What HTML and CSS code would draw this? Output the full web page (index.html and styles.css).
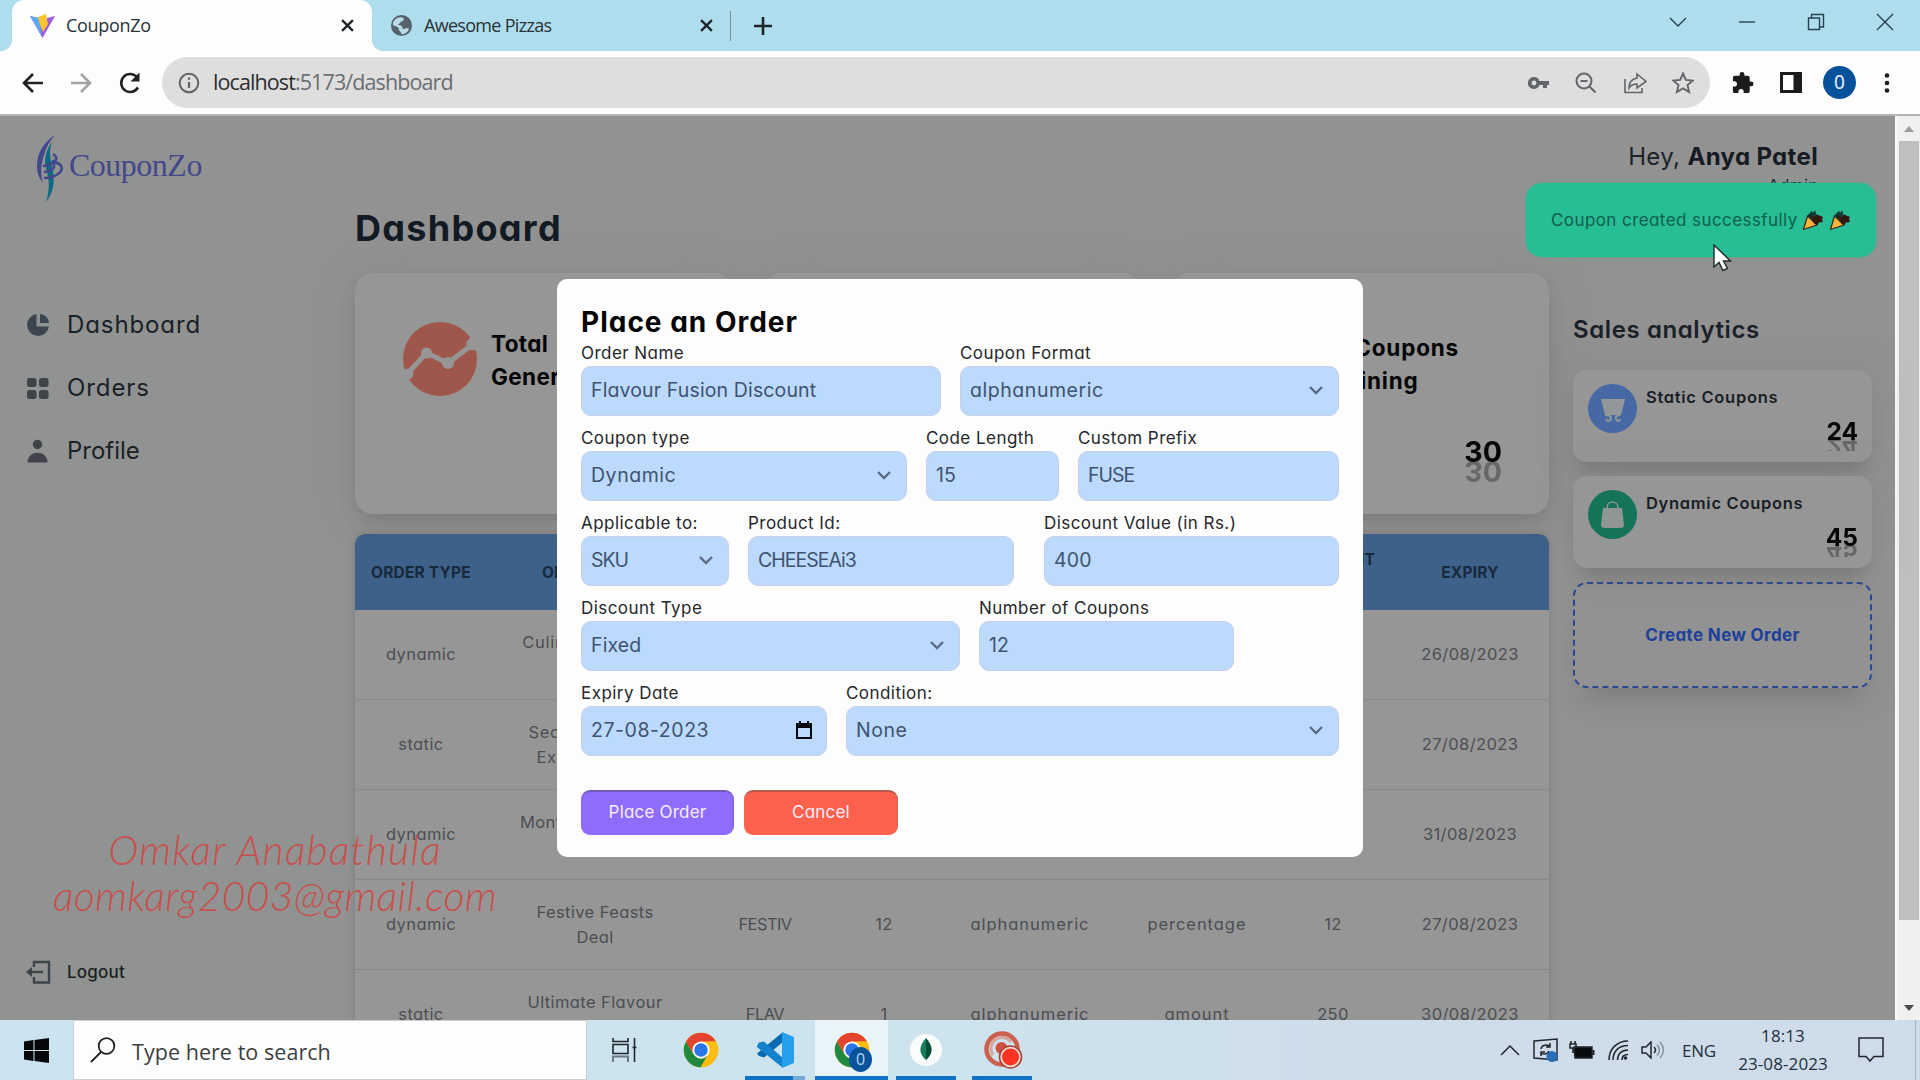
FILE: index.html
```html
<!DOCTYPE html>
<html lang="en">
<head>
<meta charset="utf-8">
<title>CouponZo</title>
<link rel="stylesheet" href="styles.css">
</head>
<body>
<svg width="0" height="0" class="defs">
  <defs>
    <symbol id="chev" viewBox="0 0 16 10"><path d="M2 2l6 6 6-6" fill="none" stroke="#5a6b85" stroke-width="2.4"/></symbol>
    <symbol id="x" viewBox="0 0 12 12"><path d="M1 1l10 10M11 1L1 11" fill="none" stroke="currentColor" stroke-width="2.1"/></symbol>
    <symbol id="chrome" viewBox="0 0 48 48">
      <circle cx="24" cy="24" r="23" fill="#fbbd12"/>
      <path d="M4.1 12.5A23 23 0 0 0 24 47l9.5-17.5L24 24 14 29.5z" fill="#20893d"/>
      <path d="M4.1 12.5A23 23 0 0 1 43.9 12.5H24L14 29.5z" fill="#e4432f"/>
      <path d="M43.9 12.5A23 23 0 0 1 23.5 47L34 29 30 13z" fill="#fbbd12"/>
      <circle cx="24" cy="24" r="11.5" fill="#fff"/><circle cx="24" cy="24" r="9" fill="#2a75e8"/>
    </symbol>
    <symbol id="party" viewBox="0 0 22 22">
      <path d="M1.500 20.500L5.500 7l9.500 9z" fill="#f6b53a" stroke="#3b2412" stroke-width="1.200" stroke-linejoin="round"/>
      <path d="M5 7l4.500-5 2 1.500L13 1l1.500 5L9 9.500z" fill="#123d3a"/>
      <path d="M10 9l5-3.500 6 2.500-1 2 1 3-4 .5-2 3-3-2.500z" fill="#35160f"/>
      <path d="M8 6l6 7" stroke="#2a1a10" stroke-width="2"/>
    </symbol>
  </defs>
</svg>
<div class="screen">
  <header class="tabs">
    <div class="tab active">
      <svg class="fav" width="25" height="26" viewBox="0 0 25 26"><path d="M0 3l12.500 22L25 3l-12 3z" fill="#9b5de0"/><path d="M0 3l6 10 6 11L9 5z" fill="#5aa9f5"/><path d="M8 4l8-3 2 10-5 8-3-7z" fill="#fcc42c"/></svg>
      <span class="tab-name t1">CouponZo</span>
      <svg class="tab-x" width="13" height="13"><use href="#x"/></svg>
    </div>
    <div class="tab idle">
      <svg class="fav" width="23" height="23" viewBox="0 0 24 24"><circle cx="12" cy="12" r="11" fill="#56636b"/><path d="M5 6c4-3 6-3 9-2 1 3-1 4-3 4 0 2-2 2-3 3 2 1 5 1 5 3s2 2 3 1c2-1 3 1 4 0-1 4-5 6-8 6 0-3-3-3-3-6 0-2-5-2-6-4 0-2 1-4 2-5z" fill="#b9dbe8"/></svg>
      <span class="tab-name t2">Awesome Pizzas</span>
      <svg class="tab-x" width="13" height="13"><use href="#x"/></svg>
    </div>
    <i class="tab-sep"></i>
    <svg class="plus" width="18" height="18" viewBox="0 0 18 18"><path d="M9 0v18M0 9h18" stroke="#1c2429" stroke-width="2.600"/></svg>
    <div class="win">
      <svg width="18" height="18" viewBox="0 0 18 18"><path d="M1 5l8 8 8-8" /></svg>
      <svg width="18" height="18" viewBox="0 0 18 18"><path d="M1 9h16"/></svg>
      <svg width="18" height="18" viewBox="0 0 18 18"><path d="M1.500 5h11v11.500h-11zM4.500 5V1.500h12V14h-4"/></svg>
      <svg width="18" height="18" viewBox="0 0 18 18"><path d="M1 1l16 16M17 1L1 17"/></svg>
    </div>
  </header>
  <nav class="toolbar">
    <div class="navs">
      <svg width="22" height="22" viewBox="0 0 22 22" class="dark"><path d="M21 11H3M11 2l-9 9 9 9"/></svg>
      <svg width="22" height="22" viewBox="0 0 22 22" class="pale"><path d="M1 11h18M11 2l9 9-9 9"/></svg>
      <svg width="24" height="24" viewBox="0 0 24 24" class="dark"><path d="M20 16.500A9 9 0 1 1 19 6"/><path d="M21.500 1.500v9h-9z" fill="#222" stroke="none"/></svg>
    </div>
    <div class="omni">
      <svg width="22" height="22" viewBox="0 0 22 22"><circle cx="11" cy="11" r="9.300" fill="none" stroke="#5f6368" stroke-width="2"/><path d="M11 10v6M11 5.500v2.200" stroke="#5f6368" stroke-width="2.200"/></svg>
      <span class="url">localhost<em>:5173/dashboard</em></span>
      <div class="omni-icons">
        <svg width="22" height="16" viewBox="0 0 22 16"><path d="M6 2a6 6 0 1 0 5.500 8H15v3h4v-3h2V6H11.500A6 6 0 0 0 6 2z" fill="#62666a"/><circle cx="6" cy="8" r="2.400" fill="#dedede"/></svg>
        <svg width="22" height="22" viewBox="0 0 22 22"><circle cx="9" cy="9" r="7.500"/><path d="M14.500 14.500l6 6M5.500 9h7"/></svg>
        <svg width="24" height="22" viewBox="0 0 24 22"><path d="M2 7v13.500h17V16M14 2l9 7.500-9 6.500v-4c-4 0-6 1-8 4 0-6 3-9 8-10z" stroke-width="1.600"/></svg>
        <svg width="22" height="22" viewBox="0 0 22 22"><path d="M11 1.500l2.800 6.400 7 .6-5.300 4.600 1.600 6.900L11 16.400 4.900 20l1.600-6.900L1.200 8.500l7-.6z" stroke-width="1.900"/></svg>
      </div>
    </div>
    <div class="ext">
      <svg width="23" height="23" viewBox="0 0 24 24"><path d="M21 11h-1.500V7a2 2 0 0 0-2-2H14V3.500a2.500 2.500 0 0 0-5 0V5H4a2 2 0 0 0-2 2v3.800h1.500a2.700 2.700 0 0 1 0 5.400H2V21a2 2 0 0 0 2 2h3.800v-1.500a2.700 2.700 0 0 1 5.400 0V23H17.500a2 2 0 0 0 2-2v-5H21a2.500 2.500 0 0 0 0-5z" fill="#1c1c1c"/></svg>
      <svg width="22" height="21" viewBox="0 0 22 21"><path d="M0 0h22v21H0zM3 3v15h10.500V3z" fill="#1c1c1c" fill-rule="evenodd"/></svg>
      <span class="avatar">0</span>
      <svg width="6" height="20" viewBox="0 0 6 20"><g fill="#1c1c1c"><circle cx="3" cy="2.500" r="2.300"/><circle cx="3" cy="10" r="2.300"/><circle cx="3" cy="17.500" r="2.300"/></g></svg>
    </div>
  </nav>

  <div class="page">
    <aside class="side">
      <div class="logo">
        <svg width="28" height="70" viewBox="0 0 28 70"><path d="M20 1C8 9 2 19 2 32c0 7 2 12 6 17C5 38 6 30 9 21 11 13 15 7 20 1z" fill="#45478c"/><path d="M17 8C9 19 9 28 12 38c3 11 2 20-1 30 7-9 9-19 7-31C16 27 13 20 17 8z" fill="#0d6a86"/><path d="M18 20c5 3 4 7-1 9 9-2 13 6 6 11-4 3-8 4-14 4M8 32c6 0 9-2 11-6M18 29c3 4 0 8-9 9" fill="none" stroke="#45478c" stroke-width="2.600"/></svg>
        <span>CouponZo</span>
      </div>
      <ul class="menu">
        <li><svg width="24" height="24" viewBox="0 0 24 24"><path d="M10.500 1A11 11 0 1 0 23 13.500H10.500z" fill="#3c444d"/><path d="M14 1v9h9A9.500 9.500 0 0 0 14 1z" fill="#3c444d"/></svg><span>Dashboard</span></li>
        <li><svg width="24" height="24" viewBox="0 0 24 24"><g fill="#404449"><rect x="1" y="2" width="9.500" height="9" rx="2.500"/><rect x="13" y="2" width="9.500" height="9" rx="2.500"/><rect x="1" y="14" width="9.500" height="9" rx="2.500"/><rect x="13" y="14" width="9.500" height="9" rx="2.500"/></g></svg><span>Orders</span></li>
        <li><svg width="24" height="24" viewBox="0 0 24 24"><circle cx="11.500" cy="5.500" r="4.700" fill="#404449"/><path d="M1.500 23.500c0-13 20-13 20 0z" fill="#42424c"/></svg><span class="tight">Profile</span></li>
      </ul>
      <div class="logout"><svg width="25" height="24" viewBox="0 0 25 24"><path d="M8 7V2h15v20.500H8V17M2 12h15" fill="none" stroke="#3c454a" stroke-width="2.400"/><path d="M0 12l6-5v10z" fill="#3c454a"/></svg><span>Logout</span></div>
    </aside>

    <main class="main">
      <h1>Dashboard</h1>
      <section class="stats">
        <div class="stat">
          <svg width="76" height="76" viewBox="0 0 76 76"><circle cx="38" cy="38" r="37" fill="#9f564b"/><g fill="#969696"><circle cx="6" cy="53" r="5.500"/><circle cx="24.500" cy="32" r="5.500"/><circle cx="46" cy="42" r="6"/><circle cx="71" cy="23" r="6.500"/></g><path d="M5 53l19.500-21L46 42l25-19" fill="none" stroke="#969696" stroke-width="5"/></svg>
          <p>Total<br>Generated</p>
        </div>
        <div class="stat"></div>
        <div class="stat third">
          <p>Coupons<br><span>Remaining</span></p>
          <b class="big">30</b>
        </div>
      </section>
      <div class="table">
        <div class="row head"><span>ORDER TYPE</span><span>ORDER NAME</span><span></span><span></span><span></span><span></span><span>DISCOUNT<br>VALUE</span><span>EXPIRY</span></div>
        <div class="row"><span>dynamic</span><span class="c1">Culinary Delights<br>Offer</span><span></span><span></span><span></span><span></span><span></span><span>26/08/2023</span></div>
        <div class="row"><span>static</span><span class="c2">Secret Flavours<br>Extravaganza</span><span></span><span></span><span></span><span></span><span></span><span>27/08/2023</span></div>
        <div class="row"><span>dynamic</span><span>Monthly Munchies<br>Deal</span><span></span><span></span><span></span><span></span><span></span><span>31/08/2023</span></div>
        <div class="row"><span>dynamic</span><span>Festive Feasts<br>Deal</span><span class="caps">FESTIV</span><span>12</span><span class="wide">alphanumeric</span><span class="wide">percentage</span><span>12</span><span>27/08/2023</span></div>
        <div class="row"><span>static</span><span>Ultimate Flavour<br>Feast</span><span class="caps">FLAV</span><span>1</span><span class="wide">alphanumeric</span><span class="wide">amount</span><span>250</span><span>30/08/2023</span></div>
      </div>
    </main>

    <section class="right">
      <div class="hey">Hey, <b>Anya Patel</b><small>Admin</small></div>
      <h2>Sales analytics</h2>
      <div class="mini">
        <svg width="49" height="49" viewBox="0 0 49 49"><circle cx="24.500" cy="24.500" r="24.500" fill="#4669a6"/><path d="M13 15h24l-4 16H17z" fill="#949799"/><path d="M17 31c3 0 6 0 6 3s-4 4-5 1M32 31c-3 0-5 1-4 4s4 2 4 0" fill="none" stroke="#949799" stroke-width="2"/></svg>
        <strong>Static Coupons</strong><b>24</b>
      </div>
      <div class="mini">
        <svg width="49" height="49" viewBox="0 0 49 49"><circle cx="24.500" cy="24.500" r="24.500" fill="#15735a"/><path d="M15 18h19l2 17q0 3-4 3H17q-4 0-4-3z" fill="#8f9693"/><path d="M19 21v-3c0-8 11-8 11 0v3" fill="none" stroke="#8f9693" stroke-width="1.500"/></svg>
        <strong>Dynamic Coupons</strong><b>45</b>
      </div>
      <div class="create">Create New Order</div>
    </section>

    <div class="scroll"><i class="up"></i><i class="thumb"></i><i class="down"></i></div>

    <div class="toast"><span>Coupon created successfully</span><svg width="22" height="22"><use href="#party"/></svg><svg width="22" height="22"><use href="#party"/></svg></div>

    <form class="modal">
      <h3>Place an Order</h3>
      <div class="frow r1">
        <label>Order Name<span class="inp">Flavour Fusion Discount</span></label>
        <label>Coupon Format<span class="inp fmt">alphanumeric<svg width="16" height="10"><use href="#chev"/></svg></span></label>
      </div>
      <div class="frow r2">
        <label>Coupon type<span class="inp fmt">Dynamic<svg width="16" height="10"><use href="#chev"/></svg></span></label>
        <label>Code Length<span class="inp">15</span></label>
        <label>Custom Prefix<span class="inp up-case">FUSE</span></label>
      </div>
      <div class="frow r3">
        <label>Applicable to:<span class="inp up-case">SKU<svg width="16" height="10"><use href="#chev"/></svg></span></label>
        <label>Product Id:<span class="inp up-case">CHEESEAi3</span></label>
        <label class="val">Discount Value (in Rs.)<span class="inp">400</span></label>
      </div>
      <div class="frow r4">
        <label>Discount Type<span class="inp">Fixed<svg width="16" height="10"><use href="#chev"/></svg></span></label>
        <label>Number of Coupons<span class="inp">12</span></label>
      </div>
      <div class="frow r5">
        <label>Expiry Date<span class="inp fmt">27-08-2023<svg width="16" height="18" viewBox="0 0 16 18"><path d="M0 2h3V0h2v2h6V0h2v2h3v16H0zM2 7v9h12V7z" fill="#05080c" fill-rule="evenodd"/></svg></span></label>
        <label>Condition:<span class="inp fmt">None<svg width="16" height="10"><use href="#chev"/></svg></span></label>
      </div>
      <div class="btns"><span class="btn ok">Place Order</span><span class="btn no">Cancel</span></div>
    </form>
  </div>

  <footer class="taskbar">
    <div class="start"><svg width="25" height="25" viewBox="0 0 25 25"><path d="M0 3.500L9.500 2v10H0zM10.500 1.900L25 0v12H10.500zM0 13h9.500v10L0 21.600zM10.500 13H25v12l-14.500-2z" fill="#05070a"/></svg></div>
    <div class="search"><svg width="26" height="26" viewBox="0 0 26 26"><circle cx="16.500" cy="9" r="7.800" fill="none" stroke="#222" stroke-width="1.800"/><path d="M11 15L1 25" stroke="#222" stroke-width="1.800"/></svg><span>Type here to search</span></div>
    <div class="apps">
      <div class="app tv"><svg width="25" height="24" viewBox="0 0 25 24" fill="none" stroke="#20262b" stroke-width="1.600"><path d="M1 0v3.500h15V0M1 6.500h15v9H1zM22.500 0v24M20.500 9.500h4"/><path d="M1 24v-5.500h15V24" stroke="#6f7a80" stroke-width="2"/></svg></div>
      <div class="app ch"><svg width="36" height="36"><use href="#chrome"/></svg></div>
      <div class="app run vs"><svg width="37" height="36" viewBox="0 0 37 36"><path d="M26 0v10L7 25.500l-5-1.500-2-2.500z" fill="#0a6ab0"/><path d="M0 14l2-3.500 5-1L26 26v10L0 15z" fill="#1381cc"/><path d="M25 0l12 5v26l-12 5z" fill="#26a0ee"/></svg></div>
      <div class="app run on"><svg width="36" height="36"><use href="#chrome"/></svg><span class="badge">0</span></div>
      <div class="app run mg"><svg width="32" height="32" viewBox="0 0 32 32"><circle cx="16" cy="16" r="16" fill="#fafcfc"/><path d="M16 4c-8 9-7 16 0 22z" fill="#13805c"/><path d="M16 4c8 9 7 16 0 22z" fill="#064c38"/></svg></div>
      <div class="app run cm"><svg width="40" height="38" viewBox="0 0 40 38"><circle cx="18" cy="18" r="15.500" fill="none" stroke="#cb604f" stroke-width="4.500"/><path d="M9 24A11 11 0 0 1 27 11" fill="none" stroke="#d6a59c" stroke-width="3"/><circle cx="17.500" cy="17" r="6" fill="#cf5240"/><circle cx="26.500" cy="26" r="11" fill="#efdcd8" stroke="#a93c30" stroke-width="1.500"/><circle cx="26.500" cy="26" r="8.500" fill="#fb3423"/></svg></div>
    </div>
    <div class="tray">
      <svg width="20" height="12" viewBox="0 0 20 12"><path d="M1 11l9-9 9 9"/></svg>
      <svg class="t-up" width="26" height="24" viewBox="0 0 26 24"><path d="M1 3l23-2v21L1 20z"/><path d="M8 11a5 4.500 0 0 1 9-2M17 5v4h-4M16 13a5 4.500 0 0 1-8 2M8 18v-4h4" stroke-width="1.500"/><circle cx="19" cy="18.500" r="5.500" fill="#2a6cb8" stroke="none"/></svg>
      <svg class="t-bat" width="26" height="18" viewBox="0 0 26 18"><path d="M5 6h18v11H6z" fill="#080a0c"/><path d="M24.500 9v5" stroke-width="2"/><path d="M2 0v3M6 0v3M1 3h6v4H1zM4 7v5" stroke-width="1.600"/></svg>
      <svg class="t-wifi" width="21" height="20" viewBox="0 0 21 20"><path d="M1 20C1 9 9 1 20 1M5 20C5 11 11 5.500 20 5.500M9.500 20c0-6 4-10 10.500-10M14 20c0-3 2-5.500 6-5.500"/><circle cx="17.500" cy="18" r="1.800" fill="#20262b" stroke="none"/></svg>
      <svg class="t-vol" width="24" height="18" viewBox="0 0 24 18"><path d="M1 6h4l5-5v16l-5-5H1zM13 6q3 3 0 6"/><path d="M16 3.500q5 5.500 0 11M19 1q7 8 0 16" stroke="#8794a0"/></svg>
      <span class="eng">ENG</span>
      <div class="clock"><span>18:13</span><span>23-08-2023</span></div>
      <svg class="t-note" width="26" height="26" viewBox="0 0 26 26"><path d="M1 1h24v18.500h-9L12 24l-4-4.500H1z"/></svg>
      <i class="peek"></i>
    </div>
  </footer>

  <div class="mark"><span class="m1">Omkar Anabathula</span><span class="m2">aomkarg2003@gmail.com</span></div>
  <svg class="cursor" width="20" height="28" viewBox="0 0 20 28"><path d="M1 1v22l5-4.500 4 8 4.500-2-4-7.500h7z" fill="#fff" stroke="#1d2a28" stroke-width="1.400"/></svg>
</div>
</body>
</html>
```
FILE: styles.css
```css
* { box-sizing: border-box; }
body { margin: 0; background: #929292; }
.defs { position: absolute; }
svg { display: block; flex: none; }
h1, h2, h3, p, ul { margin: 0; padding: 0; }

.screen {
  position: relative;
  width: 1920px;
  height: 1080px;
  overflow: hidden;
  display: flex;
  flex-direction: column;
  font-family: Inter, "Noto Sans", sans-serif;
  font-feature-settings: "cv11";
  color: #141a22;
}

/* tab strip */
.tabs {
  height: 51px;
  flex: none;
  display: flex;
  align-items: center;
  background: #aedeed;
  padding-left: 12px;
  font-family: "Open Sans", "Noto Sans", sans-serif;
}
.tab { display: flex; align-items: center; height: 51px; color: #2a3135; }
.tab.active { position: relative; width: 360px; padding: 0 18px; background: #fdfdfd; border-radius: 12px 12px 0 0; }
.tab.active::before, .tab.active::after {
  content: "";
  position: absolute;
  bottom: 0;
  width: 12px;
  height: 12px;
}
.tab.active::before { left: -12px; background: radial-gradient(circle at 0 0, #aedeed 12px, #fdfdfd 12.500px); }
.tab.active::after { right: -12px; background: radial-gradient(circle at 100% 0, #aedeed 12px, #fdfdfd 12.500px); }
.tab.idle { width: 358px; padding: 0 17px 0 18px; }
.tab-name { font-size: 18px; margin-left: 11px; padding-bottom: 1px; white-space: nowrap; }
.t1 { letter-spacing: -0.3px; }
.t2 { letter-spacing: -0.700px; }
.tab-x { margin-left: auto; color: #1c2226; }
.tab-sep { width: 1px; height: 30px; background: #70919d; }
.plus { margin-left: 23px; }
.win { margin-left: auto; display: flex; gap: 51px; padding: 0 26px 8px 0; }
.win svg { fill: none; stroke: #27424e; stroke-width: 1.400; }

/* toolbar */
.toolbar { height: 65px; flex: none; display: flex; align-items: flex-start; background: #fdfdfd; border-bottom: 2px solid #b5b5b5; padding-top: 6px; }
.navs { width: 162px; height: 51px; display: flex; align-items: center; gap: 26px; padding-left: 22px; }
.navs svg { fill: none; stroke-width: 2.600; }
.dark { stroke: #222; }
.pale { stroke: #a3a3a3; }
.omni { width: 1548px; height: 51px; border-radius: 26px; background: #dedede; display: flex; align-items: center; padding: 0 16px; }
.url { margin-left: 13px; padding-bottom: 2px; font: 21.500px "Open Sans", "Noto Sans", sans-serif; letter-spacing: -0.900px; color: #2b2d30; }
.url em { font-style: normal; color: #6a6e72; }
.omni-icons { margin-left: auto; display: flex; align-items: center; gap: 25.500px; }
.omni-icons svg { fill: none; stroke: #62666a; stroke-width: 2; }
.omni-icons svg:first-child { stroke: none; }
.ext { height: 51px; display: flex; align-items: center; padding-left: 21px; }
.ext svg:nth-child(2) { margin-left: 26px; }
.avatar { width: 33px; height: 33px; margin: 0 28px 0 21px; border-radius: 50%; background: #04519c; color: #e6f0fa; font: 19px/33px "Noto Sans", sans-serif; text-align: center; }

/* page */
.page { position: relative; height: 904px; flex: none; display: grid; grid-template-columns: 312px 1237px 346px 25px; background: #929292; overflow: hidden; }
.side { background: #909391; display: flex; flex-direction: column; padding: 18px 0 36px 35px; }
.logo { display: flex; align-items: center; height: 70px; gap: 6px; }
.logo span { font: 32px "Liberation Serif", serif; color: #45478a; letter-spacing: -0.5px; padding-bottom: 8px; }
.menu { list-style: none; margin: 89px 0 0 -9px; }
.menu li { height: 63px; display: flex; align-items: center; gap: 17px; font-size: 24px; color: #1a2129; letter-spacing: 0.9px; }
.menu .tight { letter-spacing: 0; }
.logout { margin: auto 0 0 -9px; display: flex; align-items: center; gap: 16px; font-size: 17px; line-height: 24px; font-weight: 500; color: #1b1f22; letter-spacing: 0.2px; }

.main { position: relative; padding-left: 43px; height: 904px; overflow: visible; }
.main h1 { margin-top: 88px; height: 69px; font-size: 36px; line-height: 48px; letter-spacing: 1.300px; color: #121a23; font-weight: 700; }
.stats { display: grid; grid-template-columns: repeat(3, 1fr); gap: 32px; height: 241px; }
.stat { background: #969696; border-radius: 18px; box-shadow: 0 0 42px rgba(116, 116, 126, .3), 0 12px 20px -6px rgba(70, 70, 70, .3); padding: 48px 0 0 47px; display: flex; gap: 13px; color: #050505; }
.stat p { font-size: 22.500px; line-height: 33px; font-weight: 700; letter-spacing: 0.4px; padding-top: 6px; white-space: nowrap; }
.third { position: relative; padding: 52px 0 0 182px; }
.third p { letter-spacing: 0.8px; }
.third p span { margin-left: -60px; }
.big { position: absolute; right: 47px; top: 166px; font-size: 28.500px; line-height: 26px; -webkit-box-reflect: below -7px linear-gradient(rgba(0, 0, 0, .32), rgba(0, 0, 0, .32)); }

.table { margin-top: 20px; border-radius: 10px 10px 0 0; background: #969696; box-shadow: 0 0 7px rgba(90, 90, 90, .4); overflow: hidden; }
.row { display: grid; grid-template-columns: 132px 216px 124px 114px 178px 156px 116px 158px; height: 90px; align-items: center; text-align: center; border-bottom: 1px solid #888; font-size: 16.500px; line-height: 25px; letter-spacing: 0.4px; color: #4b4e53; white-space: nowrap; }
.row.head { height: 76px; border: 0; background: #3d6189; color: #18293c; font-weight: 700; font-size: 15.500px; letter-spacing: 0.2px; }
.row .wide { letter-spacing: 0.950px; }
.row .caps { letter-spacing: -0.6px; }
.row .c1, .row .c2 { letter-spacing: 0.7px; }

.right { padding: 26px 23px 0 24px; position: relative; }
.hey { height: 70px; padding-right: 54px; text-align: right; font-size: 24px; line-height: 30px; letter-spacing: 0.350px; white-space: nowrap; color: #1c222a; }
.hey b { color: #161b23; }
.hey small { display: block; font-size: 16px; line-height: 22px; padding-top: 2px; }
.right h2 { margin-top: 102px; height: 56px; font-size: 24px; line-height: 31px; letter-spacing: 0.600px; font-weight: 600; color: #1b2129; }
.mini { position: relative; height: 92px; margin-bottom: 14px; border-radius: 14px; background: #969696; box-shadow: 0 0 38px rgba(116, 116, 126, .3), 0 16px 18px -8px rgba(70, 70, 70, .3); padding: 14px 14px 0 15px; display: flex; gap: 9px; }
.mini strong { padding-top: 1px; font-size: 16.500px; line-height: 24px; letter-spacing: 0.700px; font-weight: 600; color: #191e26; white-space: nowrap; }
.mini b { position: absolute; right: 14px; top: 50px; font-size: 24.500px; line-height: 23px; color: #050505; -webkit-box-reflect: below -8px linear-gradient(transparent 30%, rgba(0, 0, 0, .32) 32%); }
.create { height: 106px; border: 2px dashed #28498f; border-radius: 14px; box-shadow: 0 20px 30px -10px rgba(70, 70, 70, .3); display: flex; align-items: center; justify-content: center; font-size: 17px; letter-spacing: 0.350px; font-weight: 700; color: #1d409a; }

.scroll { background: #f0f0f0; display: flex; flex-direction: column; align-items: center; border-left: 2px solid #fafafa; }
.up, .down { border: 5.500px solid transparent; }
.up { border-top: 0; border-bottom: 6px solid #9c9c9c; margin: 10px 0 9px; }
.thumb { width: 20px; height: 779px; background: #bfbfbf; }
.down { border-top: 6px solid #4a4a4a; border-bottom: 0; margin-top: auto; margin-bottom: 9px; }

.toast { position: absolute; left: 1526px; top: 67px; width: 350px; height: 74px; border-radius: 16px; background: #27bd95; display: flex; align-items: center; gap: 5px; padding: 0 0 1px 25px; font-size: 17px; letter-spacing: 0.420px; color: #0f604b; white-space: nowrap; box-shadow: 0 0 3px rgba(39, 189, 149, .6); }
.toast span { width: 246px; }

/* order form */
.modal { position: absolute; left: 557px; top: 163px; width: 806px; height: 578px; background: #fdfdfd; border-radius: 10px; padding: 23px 24px; }
.modal h3 { height: 38px; font-size: 28px; line-height: 40px; letter-spacing: 1px; font-weight: 700; color: #050505; }
.frow { display: grid; gap: 19px; height: 85px; }
.r1 { grid-template-columns: 360px 379px; }
.r2 { grid-template-columns: 326px 133px 261px; }
.r3 { grid-template-columns: 148px 266px 1fr; }
.r4 { grid-template-columns: 379px 255px; }
.r5 { grid-template-columns: 246px 493px; }
.val { margin-left: 11px; }
.frow label { display: block; font-size: 17px; line-height: 26px; letter-spacing: 0.450px; color: #26282b; white-space: nowrap; }
.inp { display: flex; align-items: center; justify-content: space-between; height: 50px; padding: 0 14px 2px 9px; border: 1px solid #c8cfe8; border-radius: 10px; background: #bcd9fe; color: #3f5370; font-size: 19.500px; letter-spacing: 0.130px; }
.fmt { letter-spacing: 0.550px; }
.up-case { letter-spacing: -1px; }
.btns { display: flex; gap: 10px; margin-top: 25px; }
.btn { width: 153px; height: 45px; border-radius: 9px; font-size: 17px; line-height: 40px; letter-spacing: 0.200px; text-align: center; color: #f5eefc; border: 1px solid; border-top-width: 2px; }
.ok { background: #8f6cfb; border-color: #7359ba #7f67c6 #8f6cfb #8f6cfb; }
.no { width: 154px; background: #fb614c; border-color: #b35a4d #d46253 #fb614c #fb614c; }

/* taskbar */
.taskbar { height: 60px; flex: none; display: flex; background: linear-gradient(90deg, #cbe4ef, #cde3ee 50%, #cfddeb 70%, #cedbe9); font-family: "Open Sans", "Noto Sans", sans-serif; color: #23303c; }
.start { width: 73px; padding: 18px 0 0 24px; }
.search { width: 514px; background: #fdfdfd; border: 1px solid #cfcfcf; display: flex; align-items: center; padding: 0 0 0 16px; gap: 16px; font-size: 21.500px; color: #3b3f43; }
.search svg { margin-bottom: 1px; }
.search span { padding-top: 3px; letter-spacing: 0.050px; }
.apps { display: flex; }
.app { position: relative; width: 76px; height: 60px; display: flex; align-items: center; justify-content: center; }
.app.tv { width: 74px; }
.ch svg { margin-left: 3px; }
.run::after { content: ""; position: absolute; bottom: 0; left: 8px; right: 8px; height: 4px; background: #0f71c8; }
.vs::after { background: linear-gradient(90deg, #0f71c8 80%, #74a9d8 80%); }
.on { width: 73px; margin-left: 2px; background: #e9f4f8; }
.on::after { left: 0; right: 0; }
.badge { position: absolute; left: 34px; top: 27px; width: 23px; height: 25px; border-radius: 50%; background: #09539b; color: #b8d8f2; font-size: 16px; line-height: 25px; text-align: center; }
.mg { width: 76px; }
.cm svg { margin-left: 3px; }
.tray { margin-left: auto; display: flex; align-items: center; width: 420px; }
.tray svg { fill: none; stroke: #20262b; stroke-width: 1.500; }
.tray .t-up { margin-left: 13px; }
.t-bat { margin-left: 10px; }
.t-wifi { margin-left: 13px; }
.t-vol { margin-left: 12px; }
.eng { margin-left: 17px; width: 34px; font-size: 17px; letter-spacing: -0.3px; }
.clock { width: 114px; display: flex; flex-direction: column; align-items: center; margin-left: 10px; font-size: 17px; line-height: 28px; letter-spacing: 0.100px; }
.t-note { margin-left: 18px; }
.peek { margin-left: 31px; width: 1px; height: 60px; background: #a5b3c1; }

.mark { position: absolute; left: 50px; top: 827px; width: 450px; display: flex; flex-direction: column; align-items: center; font: italic 300 41px/46px Lato, cursive; color: #c94f4c; white-space: nowrap; }
.m1 { letter-spacing: 1.200px; }
.m2 { letter-spacing: 0.250px; }
.cursor { position: absolute; left: 1713px; top: 244px; }
```
